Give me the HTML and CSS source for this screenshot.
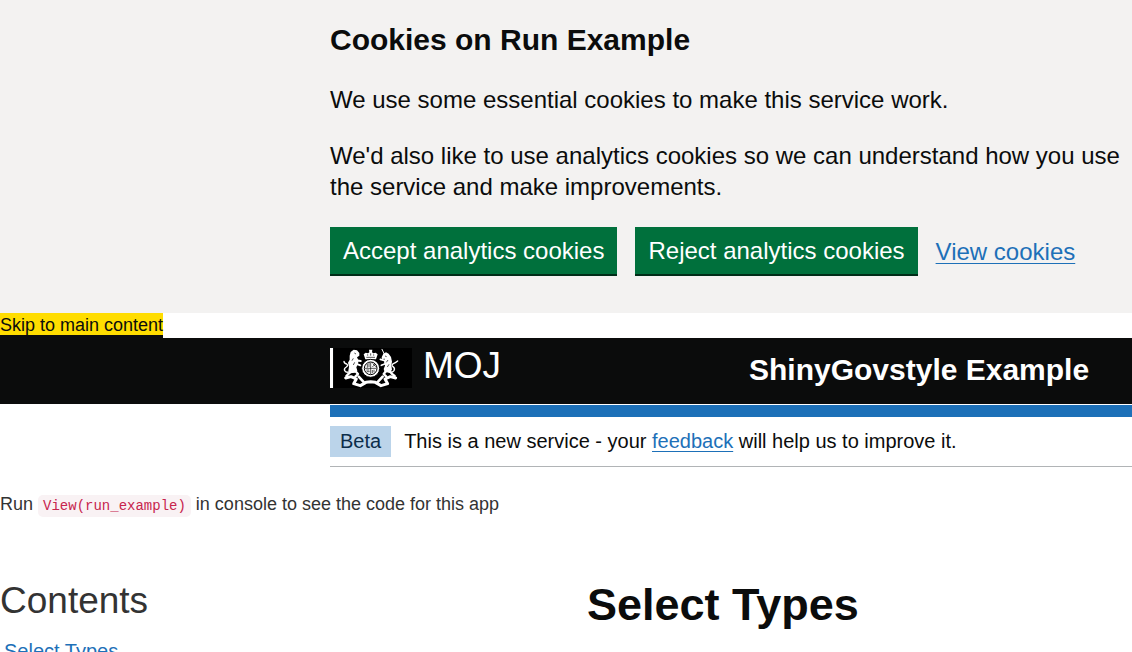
FILE: index.html
```html
<!DOCTYPE html>
<html lang="en">
<head>
<meta charset="utf-8">
<meta name="viewport" content="width=device-width, initial-scale=1">
<title>ShinyGovstyle Example</title>
<link rel="stylesheet" href="styles.css">
</head>
<body>
<section class="cookie-banner" aria-label="Cookies on Run Example">
  <h2 class="cookie-title">Cookies on Run Example</h2>
  <p class="cookie-text">We use some essential cookies to make this service work.</p>
  <p class="cookie-text">We'd also like to use analytics cookies so we can understand how you use the service and make improvements.</p>
  <div class="button-group">
    <button class="button" type="button">Accept analytics cookies</button>
    <button class="button" type="button">Reject analytics cookies</button>
    <a class="link" href="#cookies">View cookies</a>
  </div>
</section>
<div class="skip-row"><a class="skip-link" href="#main">Skip to main content</a></div>
<header class="header">
  <a class="logo" href="#home">
    <svg class="crest" viewBox="42 25 234 120" aria-hidden="true">
      <rect x="42" y="25" width="234" height="120" fill="#000"/>
      <g fill="none" stroke="#fff" stroke-linecap="round" stroke-linejoin="round">
        <path d="M92 94q-12 8-18-1q-3-7 5-11q7-5 1-9q-8-1-8-8" stroke-width="4"/>
        <path d="M108 62l14 2M108 72l13 5" stroke-width="6"/>
        <path d="M98 92l-11 9-8 8M106 94l8 9-8 8" stroke-width="7"/>
        <path d="M202 94q13 9 20-1q4-7-3-12q-6-5 1-9q6-2 13-8" stroke-width="4"/>
        <path d="M195 63l-14-4M196 72l-12 5" stroke-width="5"/>
        <path d="M207 91l8 11 9 7M199 93l-8 10 8 8" stroke-width="7"/>
        <path d="M186 29l7 14" stroke-width="3"/>
        <path d="M77 115l16-4 16 7-8 14 20 6 17-10 14-2 14 2 17 10 20-6-8-14 16-7 16 4" stroke-width="9"/>
        <path d="M116 111l16 17M188 111l-16 17" stroke-width="8"/>
      </g>
      <g fill="#fff">
        <path d="M92 37l9-7 10 2 7 8 0 8-7 5 5 10-3 12-4 8 3 10-6 6-16 2-5-8 2-12-3-12 5-9 0-12z"/>
        <path d="M190 42l8-4 8 4 7 10 3 14-2 10 2 14-7 9-15-2-3-9 4-10-3-11 3-10-9 1-1-5z"/>
        <path d="M136 59l-5-15 6-5 7 2 4-3-1-8h10l-1 8 4 3 7-2 6 5-5 15z"/>
        <circle cx="152" cy="86" r="27" stroke="#000" stroke-width="3"/>
      </g>
      <circle cx="152" cy="86" r="19" fill="none" stroke="#000" stroke-width="3"/>
      <path d="M152 69v34M135 86h34M142 73v11M147 70v12M158 72l9 9M166 73l-9 9M139 91h9M140 96h9M157 91v9M162 90v8" stroke="#000" stroke-width="2"/>
      <path d="M139 53h26M143 44v4M152 41v7M161 44v4M103 40l5 3M100 56l-4 7M104 68l-4 8M195 49l5 2M204 61l-5 7M207 74l-5 8" fill="none" stroke="#000" stroke-width="2"/>
    </svg>
    <span class="logo-text">MOJ</span>
  </a>
  <a class="service-name" href="#service">ShinyGovstyle Example</a>
</header>
<div class="phase-banner">
  <strong class="tag">Beta</strong>
  <span>This is a new service - your <a class="link" href="#feedback">feedback</a> will help us to improve it.</span>
</div>
<p class="code-note">Run <code class="code">View(run_example)</code> in console to see the code for this app</p>
<div class="content">
  <nav class="contents" aria-labelledby="contents-title">
    <h2 class="contents-title" id="contents-title">Contents</h2>
    <a class="contents-link" href="#main">Select Types</a>
  </nav>
  <main id="main"><h1 class="page-title">Select Types</h1></main>
</div>
</body>
</html>
```
FILE: styles.css
```css
:root {
  --gutter: 330px;
  --ink: #0b0c0c;
  --blue: #1d70b8;
}

* { box-sizing: border-box; }

body {
  margin: 0;
  background: #fff;
  color: var(--ink);
  font-family: "Liberation Sans", Arial, sans-serif;
  font-size: 18px;
}

h1, h2, p { margin: 0; }

.link {
  color: var(--blue);
  text-decoration: underline;
  text-decoration-thickness: 1px;
  text-underline-offset: 3px;
}

.cookie-banner {
  padding: 20px 8px 38px var(--gutter);
  background: #f3f2f1;
  font-size: 24px;
  line-height: 31px;
}

.cookie-title {
  margin-bottom: 25px;
  font-size: 30px;
  line-height: 39px;
}

.cookie-text { margin-bottom: 25px; }

.button-group {
  display: flex;
  align-items: center;
  gap: 18px;
}

.button {
  padding: 11px 13px 12px;
  border: 0;
  background: #00703c;
  box-shadow: inset 0 -1px 0 #002d18, 0 1px 0 #002d18;
  color: #fff;
  font: inherit;
  line-height: 25px;
}

.skip-row {
  display: flex;
  height: 25px;
}

.skip-link {
  height: 22px;
  background: #fd0;
  box-shadow: 0 3px 0 var(--ink);
  color: var(--ink);
  line-height: 24px;
  text-decoration: none;
}

.header {
  display: grid;
  grid-template-columns: 419px 1fr;
  align-items: start;
  padding: 10px 0 12px var(--gutter);
  background: var(--ink);
}

.header a {
  color: #fff;
  text-decoration: none;
}

.logo {
  display: flex;
  gap: 11px;
  height: 40px;
}

.crest {
  width: 82px;
  height: 40px;
  padding-left: 1px;
  border-left: 3px solid #fff;
}

.logo-text {
  font-size: 37px;
  line-height: 35px;
}

.service-name {
  font-size: 30px;
  font-weight: bold;
  line-height: 44px;
}

.phase-banner {
  display: flex;
  align-items: center;
  gap: 13px;
  margin: 1px 0 0 var(--gutter);
  padding: 9px 0;
  border-top: 12px solid var(--blue);
  border-bottom: 1px solid #b1b4b6;
  font-size: 20px;
  line-height: 31px;
}

.tag {
  padding: 0 10px;
  background: #bbd4ea;
  color: #0c2d4a;
  font-weight: normal;
}

.code-note {
  padding-top: 24px;
  color: #333;
  line-height: 26px;
}

.code {
  padding: 3px 5px;
  border-radius: 5px;
  background: #f9f2f4;
  color: #c7254e;
  font-family: "Liberation Mono", monospace;
  font-size: 14px;
}

.content {
  display: grid;
  grid-template-columns: 587px 1fr;
  padding-top: 59px;
}

.contents-title {
  margin-bottom: 16px;
  color: #333;
  font-size: 37px;
  font-weight: normal;
  line-height: 45px;
}

.contents-link {
  padding-left: 4px;
  color: var(--blue);
  font-size: 20px;
  line-height: 25px;
  text-decoration: none;
}

.page-title {
  font-size: 45px;
  line-height: 54px;
}
```
